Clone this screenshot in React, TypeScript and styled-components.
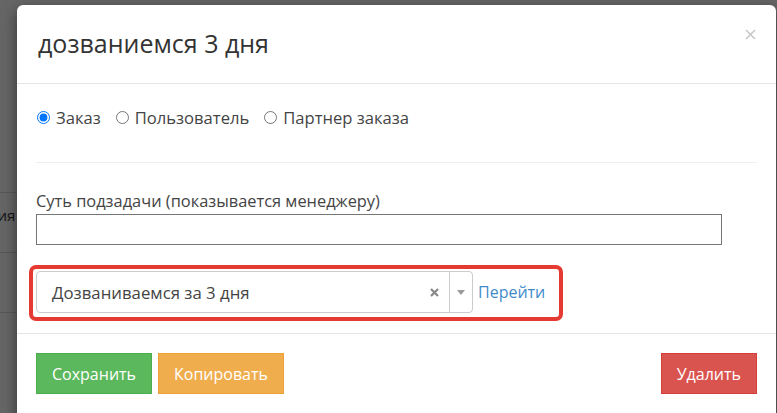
import React from "react";
import styled, { createGlobalStyle } from "styled-components";

const GlobalStyle = createGlobalStyle`
  html, body {
    margin: 0;
    padding: 0;
  }
  body {
    font-family: "Open Sans", "Liberation Sans", sans-serif;
    color: #333;
    overflow: hidden;
  }
`;

const Screen = styled.div`
  position: relative;
  width: 777px;
  height: 413px;
  overflow: hidden;
  background: #fff;
`;

const PageTable = styled.div`
  display: flex;
  flex-direction: column;
  padding-top: 192px;
  margin-left: -60px;
  width: 200px;
`;

const PageRow = styled.div`
  height: 60px;
  border-top: 1px solid #ddd;
  padding: 12px 8px;
  box-sizing: border-box;
  font-size: 15px;
  color: #333;
`;

const Overlay = styled.div`
  position: absolute;
  inset: 0;
  background: rgba(0, 0, 0, 0.6);
  padding: 5px 1px 0 17px;
  display: flex;
  align-items: flex-start;
`;

const Modal = styled.div`
  flex: 1;
  height: 440px;
  background: #fff;
  border-radius: 6px;
  box-shadow: 0 5px 15px rgba(0, 0, 0, 0.5);
  display: flex;
  flex-direction: column;
`;

const Header = styled.div`
  height: 79px;
  box-sizing: border-box;
  padding: 0 16px 0 21px;
  display: flex;
  align-items: center;
  justify-content: space-between;
  border-bottom: 1px solid #e5e5e5;
`;

const Title = styled.h4`
  margin: 0 0 2px;
  font-size: 25px;
  font-weight: 400;
  color: #333;
`;

const Close = styled.button`
  align-self: flex-start;
  margin-top: 19px;
  border: 0;
  background: none;
  padding: 0;
  width: 20px;
  height: 20px;
  display: flex;
  align-items: center;
  justify-content: center;
  cursor: pointer;
`;

const Body = styled.div`
  padding: 20px 19px 12px 19px;
  display: flex;
  flex-direction: column;
`;

const RadioGroup = styled.div`
  display: flex;
  align-items: center;
  height: 27px;
  gap: 14px;
`;

const RadioLabel = styled.label`
  display: flex;
  align-items: center;
  gap: 6px;
  font-size: 16.6px;
  color: #444;
  input {
    margin: 0 0 0 1px;
    width: 13px;
    height: 13px;
    accent-color: #0075ff;
  }
`;

const Divider = styled.hr`
  border: 0;
  border-top: 1px solid #eee;
  margin: 31px 0 28px;
`;

const FieldLabel = styled.label`
  display: block;
  font-size: 16.4px;
  color: #444;
  margin-bottom: 3px;
  line-height: 20px;
`;

const TextInput = styled.input`
  display: block;
  width: 686px;
  height: 31px;
  box-sizing: border-box;
  border: 1px solid #767676;
  border-radius: 0;
  padding: 2px 6px;
  font-family: inherit;
  font-size: 15px;
`;

const Highlight = styled.div`
  margin: 20px 0 0 -7px;
  align-self: flex-start;
  display: flex;
  align-items: center;
  border: 4px solid #e53a32;
  border-radius: 7px;
  padding: 2px 14px 4px 3px;
`;

const Select = styled.div`
  width: 437px;
  height: 42px;
  box-sizing: border-box;
  border: 1px solid #ccc;
  border-radius: 4px;
  display: flex;
  align-items: center;
`;

const SelectValue = styled.div`
  flex: 1;
  padding-left: 15px;
  font-size: 16.8px;
  color: #444;
`;

const ClearIcon = styled.span`
  width: 24px;
  display: flex;
  justify-content: center;
  margin-right: 3px;
`;

const Arrow = styled.span`
  align-self: stretch;
  width: 22px;
  border-left: 1px solid #ccc;
  display: flex;
  align-items: center;
  justify-content: center;
`;

const GoLink = styled.a`
  margin-left: 5px;
  font-size: 16px;
  color: #428bca;
  text-decoration: none;
`;

const Footer = styled.div`
  border-top: 1px solid #e5e5e5;
  padding: 19px 19px 0 19px;
  display: flex;
  gap: 6px;
`;

const Button = styled.button<{ $kind: "success" | "warning" | "danger" }>`
  height: 41px;
  padding: 0 15px;
  font-family: inherit;
  font-size: 16px;
  color: #fff;
  border-radius: 0;
  cursor: pointer;
  background: ${(p) =>
    p.$kind === "success" ? "#5cb85c" : p.$kind === "warning" ? "#f0ad4e" : "#d9534f"};
  border: 1px solid
    ${(p) =>
      p.$kind === "success" ? "#4cae4c" : p.$kind === "warning" ? "#eea236" : "#d43f3a"};
  &:last-child {
    margin-left: auto;
  }
`;

export default function App() {
  return (
    <Screen>
      <GlobalStyle />
      <PageTable>
        <PageRow>Фамилия</PageRow>
        <PageRow />
        <PageRow />
      </PageTable>
      <Overlay>
        <Modal>
          <Header>
            <Title>дозваниемся 3 дня</Title>
            <Close aria-label="Закрыть">
              <svg width="11" height="11" viewBox="0 0 11 11">
                <path d="M1 1L10 10M10 1L1 10" stroke="#c8c8c8" strokeWidth="1.6" />
              </svg>
            </Close>
          </Header>
          <Body>
            <RadioGroup>
              <RadioLabel>
                <input type="radio" name="target" defaultChecked />
                Заказ
              </RadioLabel>
              <RadioLabel>
                <input type="radio" name="target" />
                Пользователь
              </RadioLabel>
              <RadioLabel>
                <input type="radio" name="target" />
                Партнер заказа
              </RadioLabel>
            </RadioGroup>
            <Divider />
            <FieldLabel>Суть подзадачи (показывается менеджеру)</FieldLabel>
            <TextInput type="text" />
            <Highlight>
              <Select>
                <SelectValue>Дозваниваемся за 3 дня</SelectValue>
                <ClearIcon>
                  <svg width="9" height="9" viewBox="0 0 9 9">
                    <path d="M1 1L8 8M8 1L1 8" stroke="#888" strokeWidth="2.2" />
                  </svg>
                </ClearIcon>
                <Arrow>
                  <svg width="8" height="5" viewBox="0 0 8 5">
                    <path d="M0 0H8L4 5Z" fill="#999" />
                  </svg>
                </Arrow>
              </Select>
              <GoLink href="#">Перейти</GoLink>
            </Highlight>
          </Body>
          <Footer>
            <Button $kind="success">Сохранить</Button>
            <Button $kind="warning">Копировать</Button>
            <Button $kind="danger">Удалить</Button>
          </Footer>
        </Modal>
      </Overlay>
    </Screen>
  );
}
